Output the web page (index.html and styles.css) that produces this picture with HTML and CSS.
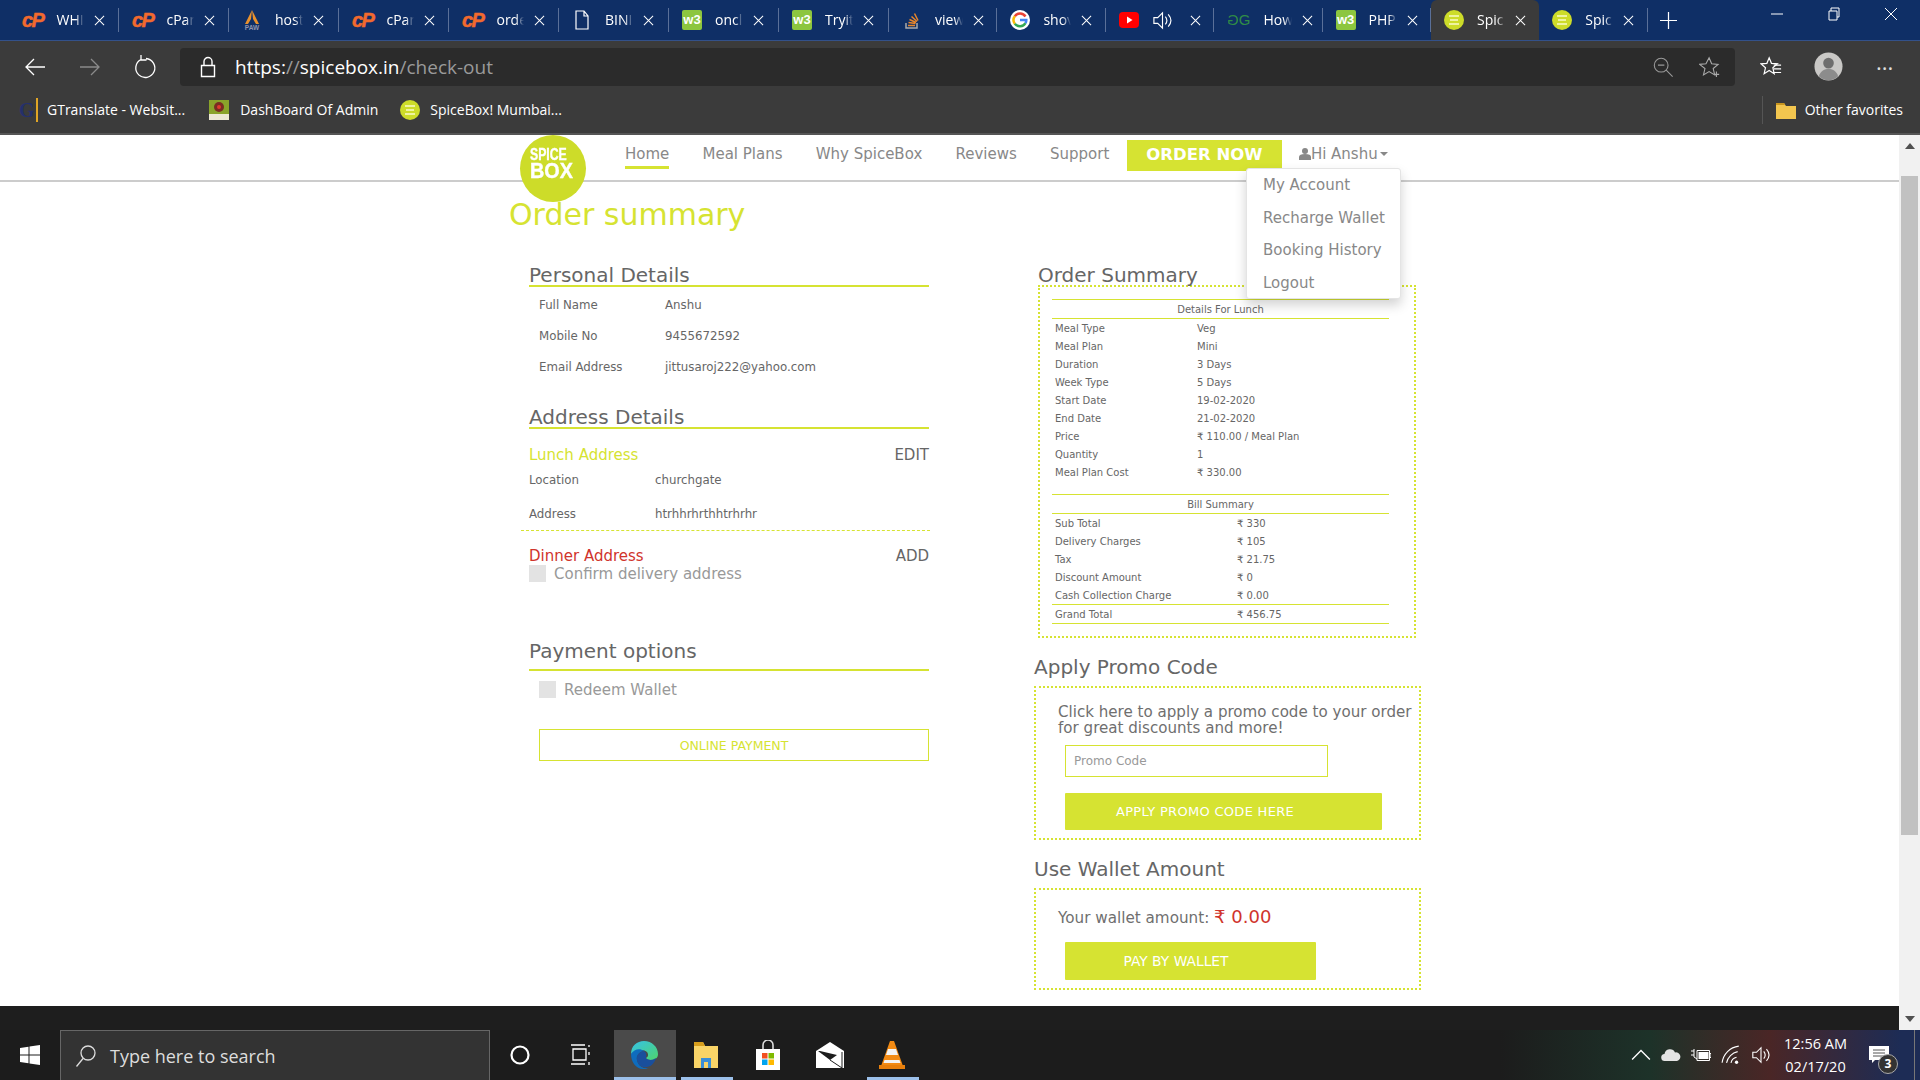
FILE: index.html
```html
<!DOCTYPE html>
<html>
<head>
  <title>SpiceBox - Order summary</title>
  <link rel="stylesheet" href="styles.css">
</head>
<body>
  <svg class="defs" width="0" height="0">
    <symbol id="i-x" viewBox="0 0 12 12"><path d="M1 1l10 10M11 1L1 11" stroke="#fff" stroke-width="1.1" fill="none"/></symbol>
    <symbol id="i-spice" viewBox="0 0 20 20"><circle cx="10" cy="10" r="10" fill="#cddc29"/><rect x="5" y="5" width="10" height="2" fill="#eef3a0"/><rect x="6" y="9" width="8" height="2" fill="#eef3a0"/><rect x="5" y="13" width="10" height="2" fill="#eef3a0"/></symbol>
    <symbol id="i-speaker" viewBox="0 0 22 22"><path d="M2 8h4l5-5v16l-5-5H2zM14 7c2 2.500 2 5.500 0 8M17 4.500c3.500 4 3.500 9 0 13" stroke="#fff" stroke-width="1.200" fill="none"/></symbol>
  </svg>

  <div class="tabs">
    <div class="tab"><span class="ico-cp">cP</span><span class="tab-title">WHI</span><svg class="tab-x"><use href="#i-x"/></svg></div>
    <div class="tab"><span class="ico-cp">cP</span><span class="tab-title">cPan</span><svg class="tab-x"><use href="#i-x"/></svg></div>
    <div class="tab">
      <svg class="ico" viewBox="0 0 20 20"><path d="M10 0L3 14h3l3-5zM10 0l7 14h-3l-3-5z" fill="#e8912d"/><text class="paw" x="10" y="19.500">PAW</text></svg>
      <span class="tab-title">host</span><svg class="tab-x"><use href="#i-x"/></svg>
    </div>
    <div class="tab"><span class="ico-cp">cP</span><span class="tab-title">cPan</span><svg class="tab-x"><use href="#i-x"/></svg></div>
    <div class="tab"><span class="ico-cp">cP</span><span class="tab-title">orde</span><svg class="tab-x"><use href="#i-x"/></svg></div>
    <div class="tab">
      <svg class="ico" viewBox="0 0 20 20"><path d="M4 1h8l4 5v13H4zM12 1v5h4" fill="none" stroke="#fff" stroke-width="1.200"/></svg>
      <span class="tab-title">BINI</span><svg class="tab-x"><use href="#i-x"/></svg>
    </div>
    <div class="tab"><span class="ico-w3">w3</span><span class="tab-title">oncl</span><svg class="tab-x"><use href="#i-x"/></svg></div>
    <div class="tab"><span class="ico-w3">w3</span><span class="tab-title">Tryit</span><svg class="tab-x"><use href="#i-x"/></svg></div>
    <div class="tab">
      <svg class="ico" viewBox="0 0 20 20"><path d="M4 13v5h11v-5" fill="none" stroke="#aaa" stroke-width="1.500"/><path d="M6 15.500h7M6.500 12.500l7 1M7.500 9.500l6.500 3M9.500 6.500l5.500 5M12.500 3.500l3.500 7" stroke="#e8862a" stroke-width="1.500"/></svg>
      <span class="tab-title">view</span><svg class="tab-x"><use href="#i-x"/></svg>
    </div>
    <div class="tab">
      <svg class="ico" viewBox="0 0 20 20"><circle cx="10" cy="10" r="10" fill="#fff"/><path d="M15.500 6.500A6.500 6.500 0 0 0 4.800 6.200" fill="none" stroke="#ea4335" stroke-width="2.500"/><path d="M4.800 6.200a6.500 6.500 0 0 0 0 7.600" fill="none" stroke="#fbbc05" stroke-width="2.500"/><path d="M4.800 13.800a6.500 6.500 0 0 0 10.700-.6" fill="none" stroke="#34a853" stroke-width="2.500"/><path d="M10 10h6.300a6.500 6.500 0 0 1-.8 3.200" fill="none" stroke="#4285f4" stroke-width="2.500"/></svg>
      <span class="tab-title">shov</span><svg class="tab-x"><use href="#i-x"/></svg>
    </div>
    <div class="tab">
      <svg class="ico" viewBox="0 0 20 20"><rect y="2" width="20" height="16" rx="4" fill="#f00"/><path d="M8 6.500l5.500 3.500L8 13.500z" fill="#fff"/></svg>
      <svg class="ico-sound"><use href="#i-speaker"/></svg>
      <svg class="tab-x"><use href="#i-x"/></svg>
    </div>
    <div class="tab">
      <span class="ico-gg"><span class="flip">G</span>G</span>
      <span class="tab-title">How</span><svg class="tab-x"><use href="#i-x"/></svg>
    </div>
    <div class="tab"><span class="ico-w3">w3</span><span class="tab-title">PHP</span><svg class="tab-x"><use href="#i-x"/></svg></div>
    <div class="tab active"><svg class="ico"><use href="#i-spice"/></svg><span class="tab-title">Spic</span><svg class="tab-x"><use href="#i-x"/></svg></div>
    <div class="tab"><svg class="ico"><use href="#i-spice"/></svg><span class="tab-title">Spic</span><svg class="tab-x"><use href="#i-x"/></svg></div>
    <svg class="new-tab" viewBox="0 0 18 18"><path d="M9 0v18M0 9h18" stroke="#fff" stroke-width="1.300"/></svg>
    <div class="win-btns">
      <svg viewBox="0 0 14 14"><path d="M1 7h12" stroke="#fff"/></svg>
      <svg viewBox="0 0 14 14"><path d="M2 4h8v9H2zM4 4V1h8v9h-2" fill="none" stroke="#fff"/></svg>
      <svg viewBox="0 0 14 14"><path d="M1 1l12 12M13 1L1 13" stroke="#fff"/></svg>
    </div>
  </div>

  <div class="toolbar">
    <svg class="tool" viewBox="0 0 24 24"><path d="M22 12H3M11 4l-8 8 8 8" fill="none" stroke="#fff" stroke-width="1.300"/></svg>
    <svg class="tool" viewBox="0 0 24 24"><path d="M2 12h19M13 4l8 8-8 8" fill="none" stroke="#8a8a8a" stroke-width="1.300"/></svg>
    <svg class="tool" viewBox="0 0 24 24"><path d="M8 4.500a9.500 9.500 0 1 0 5-1M8 0v5h5.500" fill="none" stroke="#fff" stroke-width="1.300"/></svg>
    <div class="address">
      <svg class="lock" viewBox="0 0 16 22"><path d="M1.500 9.500h13v11h-13zM4 9.500V5.500a4 4 0 0 1 8 0v4" fill="none" stroke="#fff" stroke-width="1.400"/></svg>
      <span class="url">https:<span class="dim">//</span>spicebox.in<span class="dim">/check-out</span></span>
      <svg class="addr-zoom" viewBox="0 0 24 24"><circle cx="10" cy="10" r="7.500" fill="none" stroke="#999" stroke-width="1.200"/><path d="M15.500 15.500l7 7M6.500 10h7" stroke="#999" stroke-width="1.200"/></svg>
      <svg class="addr-star" viewBox="0 0 24 24"><path d="M11 2l2.800 6.500 7 .6-5.300 4.600 1.600 6.900-6.100-3.600-6.100 3.600 1.600-6.900L.6 9.100l7-.6zM19 17v6M16 20h6" fill="none" stroke="#aaa" stroke-width="1.200"/></svg>
    </div>
    <svg class="fav-list" viewBox="0 0 24 24"><path d="M10 2l2.500 6 6.500.5-5 4.300 1.500 6.500-5.500-3.400-5.500 3.400 1.500-6.500-5-4.300 6.500-.5z" fill="none" stroke="#fff" stroke-width="1.300"/><path d="M15 10h8M15 14h8M15 18h8" stroke="#fff" stroke-width="1.300"/></svg>
    <svg class="avatar" viewBox="0 0 30 30"><circle cx="15" cy="15" r="14.500" fill="#c9c8c6"/><circle cx="15" cy="11.500" r="5.500" fill="#6e6e6e"/><path d="M5 25c2-6 6-7.500 10-7.500s8 1.500 10 7.500a14.500 14.500 0 0 1-20 0" fill="#8c8c8c"/></svg>
    <span class="dots">&middot;&middot;&middot;</span>
  </div>

  <div class="bookmarks">
    <span class="ico-g">G</span><span class="bm-text">GTranslate - Websit...</span>
    <svg class="ico bm-second" viewBox="0 0 20 20"><rect width="20" height="20" fill="#8aa32a"/><circle cx="10" cy="7" r="5" fill="#7a2d22"/><circle cx="10" cy="7" r="2" fill="#e03a2e"/><rect y="14" width="20" height="6" fill="#ece8d4"/></svg><span class="bm-text">DashBoard Of Admin</span>
    <svg class="ico bm-third"><use href="#i-spice"/></svg><span class="bm-text">SpiceBox! Mumbai...</span>
    <div class="bm-other">
      <svg class="ico" viewBox="0 0 20 20"><path d="M0 3h8l2 3h10v13H0z" fill="#f3c64f"/><path d="M0 3h8l1 2H0z" fill="#c8951f"/></svg>
      <span class="bm-text">Other favorites</span>
    </div>
  </div>

  <div class="viewport">
    <div class="page">
      <div class="site">
        <nav class="site-nav">
          <div class="logo"><span class="logo-top">SPICE</span><span class="logo-box">BOX</span></div>
          <a class="nav-link current">Home</a>
          <a class="nav-link">Meal Plans</a>
          <a class="nav-link">Why SpiceBox</a>
          <a class="nav-link">Reviews</a>
          <a class="nav-link">Support</a>
          <a class="order-now">ORDER NOW</a>
          <a class="user-link">
            <svg class="user-ico" viewBox="0 0 12 12"><circle cx="6" cy="3" r="3" fill="#888"/><path d="M0 12V9c0-2 2-3 6-3s6 1 6 3v3z" fill="#888"/></svg>Hi Anshu<span class="caret"></span>
          </a>
          <ul class="user-menu">
            <li>My Account</li>
            <li>Recharge Wallet</li>
            <li>Booking History</li>
            <li>Logout</li>
          </ul>
        </nav>

        <h1 class="page-title">Order summary</h1>

        <div class="cols">
          <div class="col-left">
            <h3 class="sec-title">Personal Details</h3>
            <div class="info-row indent"><span class="info-label">Full Name</span><span>Anshu</span></div>
            <div class="info-row indent"><span class="info-label">Mobile No</span><span>9455672592</span></div>
            <div class="info-row indent"><span class="info-label">Email Address</span><span>jittusaroj222@yahoo.com</span></div>

            <h3 class="sec-title address-title">Address Details</h3>
            <div class="addr-head lunch-head"><span class="lime">Lunch Address</span><a>EDIT</a></div>
            <div class="addr-row"><span class="info-label">Location</span><span>churchgate</span></div>
            <div class="addr-row last"><span class="info-label">Address</span><span>htrhhrhrthhtrhrhr</span></div>
            <div class="dash-line"></div>
            <div class="addr-head dinner-head"><span class="red">Dinner Address</span><a>ADD</a></div>
            <label class="check-row"><span class="fake-check"></span>Confirm delivery address</label>

            <h3 class="sec-title payment-title">Payment options</h3>
            <label class="check-row redeem"><span class="fake-check"></span>Redeem Wallet</label>
            <button class="online-btn">ONLINE PAYMENT</button>
          </div>

          <div class="col-right">
            <h3 class="sec-title plain">Order Summary</h3>
            <div class="dot-box summary-box">
              <div class="tbl-head">Details For Lunch</div>
              <div class="tbl-row"><span>Meal Type</span><span>Veg</span></div>
              <div class="tbl-row"><span>Meal Plan</span><span>Mini</span></div>
              <div class="tbl-row"><span>Duration</span><span>3 Days</span></div>
              <div class="tbl-row"><span>Week Type</span><span>5 Days</span></div>
              <div class="tbl-row"><span>Start Date</span><span>19-02-2020</span></div>
              <div class="tbl-row"><span>End Date</span><span>21-02-2020</span></div>
              <div class="tbl-row"><span>Price</span><span>₹ 110.00 / Meal Plan</span></div>
              <div class="tbl-row"><span>Quantity</span><span>1</span></div>
              <div class="tbl-row"><span>Meal Plan Cost</span><span>₹ 330.00</span></div>

              <div class="tbl-head bill-head">Bill Summary</div>
              <div class="tbl-row bill"><span>Sub Total</span><span>₹ 330</span></div>
              <div class="tbl-row bill"><span>Delivery Charges</span><span>₹ 105</span></div>
              <div class="tbl-row bill"><span>Tax</span><span>₹ 21.75</span></div>
              <div class="tbl-row bill"><span>Discount Amount</span><span>₹ 0</span></div>
              <div class="tbl-row bill"><span>Cash Collection Charge</span><span>₹ 0.00</span></div>
              <div class="tbl-row bill grand"><span>Grand Total</span><span>₹ 456.75</span></div>
            </div>

            <h3 class="sec-title plain wide promo-title">Apply Promo Code</h3>
            <div class="dot-box wide action-box promo-box">
              <p class="promo-text">Click here to apply a promo code to your order for great discounts and more!</p>
              <input class="promo-input" type="text" placeholder="Promo Code">
              <button class="lime-btn promo-btn">APPLY PROMO CODE HERE</button>
            </div>

            <h3 class="sec-title plain wide wallet-title">Use Wallet Amount</h3>
            <div class="dot-box wide action-box">
              <p class="wallet-text">Your wallet amount: <span class="wallet-amt">₹ 0.00</span></p>
              <button class="lime-btn wallet-btn">PAY BY WALLET</button>
            </div>
          </div>
        </div>
      </div>
      <div class="black-strip"></div>
    </div>
    <div class="scrollbar">
      <div class="arrow-up"></div>
      <div class="thumb"></div>
      <div class="arrow-down"></div>
    </div>
  </div>

  <div class="taskbar">
    <div class="start">
      <svg viewBox="0 0 20 20"><path d="M0 3l8.500-1.200V9.500H0zM9.500 1.600L20 0v9.500H9.500zM0 10.500h8.500v7.700L0 17zM9.500 10.500H20V20L9.500 18.400z" fill="#fff"/></svg>
    </div>
    <div class="search">
      <svg viewBox="0 0 22 24"><circle cx="13" cy="9" r="7" fill="none" stroke="#ddd" stroke-width="1.300"/><path d="M8 14.500L1.500 22.500" stroke="#ddd" stroke-width="1.300"/></svg>
      <span>Type here to search</span>
    </div>
    <div class="tb-item"><svg class="tb-ico small" viewBox="0 0 20 20"><circle cx="10" cy="10" r="8.500" fill="none" stroke="#fff" stroke-width="2.200"/></svg></div>
    <div class="tb-item task-view"><svg class="tb-ico small" viewBox="0 0 20 24"><path d="M2 6h13v11H2zM0 2h14M0 21h14M18 2v2M18 9v3M18 19v3" fill="none" stroke="#fff" stroke-width="1.300"/></svg></div>
    <div class="tb-item on">
      <svg class="tb-ico" viewBox="0 0 30 30">
        <defs><linearGradient id="edge-a" x1="0" y1="0" x2="1" y2="1"><stop offset="0" stop-color="#35c1e8"/><stop offset="1" stop-color="#4fd56c"/></linearGradient></defs>
        <path d="M2 14C2 6 8 1 15 1c8 0 14 6 14 13 0 4-3 6-7 6-3 0-5-1-5-2 2-1 3-3 1-6-3-3-10-3-16 2z" fill="url(#edge-a)"/>
        <path d="M2 14c3-5 9-6 13-3-6 1-9 6-6 12 2 4 6 6 11 5-2 1-4 1-6 1C7 29 2 22 2 14z" fill="#0f6cbd"/>
        <path d="M9 23c-3-6 0-11 6-12 3 2 2 5 2 7 1 2 6 3 10 0-2 7-7 10-13 9-3-1-4-2-5-4z" fill="#1a4f9c"/>
      </svg>
    </div>
    <div class="tb-item active">
      <svg class="tb-ico" viewBox="0 0 30 30"><path d="M3 2h9l2 4h13v22H3z" fill="#f9d467"/><path d="M3 2h9l2 4H3z" fill="#d79e1c"/><path d="M10 28V18h10v10h-3v-6h-4v6z" fill="#3a8fd8"/></svg>
    </div>
    <div class="tb-item">
      <svg class="tb-ico" viewBox="0 0 30 30"><path d="M3 9h24v21H3z" fill="#fff"/><path d="M10 9V5a5 5 0 0 1 10 0v4" fill="none" stroke="#ddd" stroke-width="1.600"/><rect x="9" y="13" width="5.500" height="5.500" fill="#f25022"/><rect x="15.500" y="13" width="5.500" height="5.500" fill="#7fba00"/><rect x="9" y="19.500" width="5.500" height="5.500" fill="#00a4ef"/><rect x="15.500" y="19.500" width="5.500" height="5.500" fill="#ffb900"/></svg>
    </div>
    <div class="tb-item">
      <svg class="tb-ico" viewBox="0 0 30 30"><path d="M1 11L15 2l14 9v17H1z" fill="#fff"/><path d="M3 11l12 9 7-5-17-4z" fill="#1c1c1c"/><path d="M15 20l12 8V12" fill="none" stroke="#1c1c1c" stroke-width="1"/></svg>
    </div>
    <div class="tb-item active">
      <svg class="tb-ico" viewBox="0 0 30 30"><path d="M13 1h4l9 25H4z" fill="#f28a13"/><path d="M11 9h8l2 6H9zM7.500 20h15l1 3h-17z" fill="#f3f3f3"/><rect x="2" y="25" width="26" height="4" fill="#e77f0c"/></svg>
    </div>
    <div class="tray">
      <div class="tray-ico"><svg viewBox="0 0 18 10"><path d="M1 9l8-8 8 8" fill="none" stroke="#fff" stroke-width="1.200"/></svg></div>
      <div class="tray-ico"><svg viewBox="0 0 20 14"><path d="M4 13a3.500 3.500 0 0 1-.5-7A5.500 5.500 0 0 1 14 4.500 4.300 4.300 0 0 1 16 13z" fill="#e4e4e4"/></svg></div>
      <div class="tray-ico"><svg viewBox="0 0 20 14"><path d="M0 3h3M0 7h3M3 1v8l3 2" fill="none" stroke="#fff"/><path d="M6 2.500h12.500v10H6zM18.500 5.500h1.500v4h-1.500z" fill="none" stroke="#fff"/><rect x="7.500" y="4" width="10" height="7" fill="#fff"/></svg></div>
      <div class="tray-ico"><svg viewBox="0 0 18 18"><path d="M1 16C2 8 8 2 16 1M5 16c1-5 5-9 10-10M9 16c.5-2.500 2.500-4.500 5-5" fill="none" stroke="#fff" stroke-width="1"/><circle cx="14" cy="15.500" r="1.500" fill="#fff"/></svg></div>
      <div class="tray-ico"><svg viewBox="0 0 22 22"><use href="#i-speaker"/></svg></div>
    </div>
    <div class="clock"><span>12:56 AM</span><span>02/17/20</span></div>
    <div class="notify">
      <svg viewBox="0 0 20 18"><path d="M0 0h20v14H6l-3 3v-3H0z" fill="#fff"/><path d="M4 4h12M4 7h12M4 10h12" stroke="#555"/></svg>
      <span class="notify-badge">3</span>
    </div>
    <div class="show-desktop"></div>
  </div>
</body>
</html>
```

FILE: styles.css
```css
* { box-sizing: border-box; }
html, body { margin: 0; height: 100%; overflow: hidden; }
body { display: flex; flex-direction: column; width: 1920px; height: 1080px; font-family: "Open Sans", sans-serif; color: #fff; background: #fff; }
.defs { position: absolute; }

/* browser tabs */
.tabs { display: flex; align-items: center; flex: 0 0 40px; padding-left: 9px; background: #0f2f66; border-bottom: 1px solid #33518a; }
.tab { display: flex; align-items: center; flex: 0 0 108.4px; height: 24px; padding-left: 13px; border-right: 1px solid #5a7099; }
.tab:nth-child(-n+8) { flex-basis: 110px; }
.tab.active { align-self: flex-end; height: 40px; background: #3b3b3b; border-right: 0; border-radius: 6px 6px 0 0; }
.ico { flex: 0 0 20px; width: 20px; height: 20px; }
.paw { fill: #8d93ad; font: bold 6.500px "Liberation Sans", sans-serif; text-anchor: middle; }
.ico-cp { flex: 0 0 20px; color: #f26a2e; font: italic bold 20px/20px "Liberation Sans", sans-serif; letter-spacing: -1.500px; -webkit-text-stroke: .5px #f26a2e; }
.ico-w3 { flex: 0 0 20px; height: 20px; background: #8cc63f; color: #fff; border-radius: 2px; font: bold 13px/20px "Liberation Sans", sans-serif; text-align: center; }
.ico-gg { flex: 0 0 20px; color: #2f8d46; font: 15px/20px "Liberation Sans", sans-serif; white-space: nowrap; }
.flip { display: inline-block; transform: scaleX(-1); }
.tab-title { flex: 0 0 28px; margin-left: 13px; overflow: hidden; font-size: 14px; line-height: 20px; white-space: nowrap; -webkit-mask-image: linear-gradient(90deg, #000 70%, transparent); mask-image: linear-gradient(90deg, #000 70%, transparent); }
.tab-x { flex: 0 0 11px; width: 11px; height: 11px; margin-left: 10px; }
.ico-sound { flex: 0 0 21px; width: 21px; height: 21px; margin-left: 13px; }
.ico-sound + .tab-x { margin-left: 17px; }
.new-tab { width: 17px; height: 17px; margin-left: 12px; }
.win-btns { display: flex; margin-left: auto; padding-right: 22px; gap: 43px; align-self: flex-start; padding-top: 7px; }
.win-btns svg { width: 14px; height: 14px; }

/* toolbar */
.toolbar { display: flex; align-items: center; flex: 0 0 48px; padding-top: 3px; background: #3b3b3b; }
.tool { width: 24px; height: 24px; margin-left: 23px; margin-right: 8px; }
.address { display: flex; align-items: center; width: 1555px; height: 38px; margin-left: 15px; background: #2b2b2b; border-radius: 4px; }
.lock { width: 16px; height: 22px; margin-left: 20px; }
.url { margin-left: 19px; font-size: 19px; }
.dim { color: #9a9a9a; }
.addr-zoom { width: 22px; height: 22px; margin-left: auto; }
.addr-star { width: 22px; height: 22px; margin-left: 25px; margin-right: 14px; }
.fav-list { width: 22px; height: 22px; margin-left: 25px; }
.avatar { width: 29px; height: 29px; margin-left: 32px; }
.dots { margin-left: 33px; font-size: 22px; line-height: 1; color: #ddd; }

/* favorites bar */
.bookmarks { display: flex; align-items: center; flex: 0 0 46px; padding-left: 19px; padding-bottom: 3px; background: #3b3b3b; border-bottom: 2px solid #555; }
.ico-g { width: 19px; color: #25306b; font: bold 20px/24px "Liberation Serif", serif; border-right: 2px solid #e0a526; }
.bm-text { margin-left: 9px; font-size: 14px; white-space: nowrap; }
.bm-second { margin-left: 24px; }
.bm-second + .bm-text { margin-left: 11px; }
.bm-third { margin-left: 22px; }
.bm-third + .bm-text { margin-left: 10px; }
.bm-other { display: flex; align-items: center; height: 28px; margin-left: auto; padding-left: 13px; padding-right: 17px; border-left: 1px solid #555; }

/* page + scrollbar */
.viewport { display: flex; flex: 1; min-height: 0; }
.page { display: flex; flex-direction: column; flex: 1; min-width: 0; }
.site { flex: 1; min-height: 0; background: #fff; color: #666; font-family: "DejaVu Sans", Verdana, sans-serif; }
.black-strip { flex: 0 0 24px; background: #1e1e1e; }
.scrollbar { display: flex; flex-direction: column; align-items: center; flex: 0 0 21px; background: #f1f1f1; }
.thumb { width: 17px; height: 659px; margin-top: 27px; background: #c1c1c1; }
.arrow-up { width: 0; height: 0; margin-top: 8px; border: 5px solid transparent; border-top: 0; border-bottom: 6px solid #505050; }
.arrow-down { width: 0; height: 0; margin-top: auto; margin-bottom: 8px; border: 5px solid transparent; border-bottom: 0; border-top: 6px solid #505050; }

/* site nav */
.site-nav { position: relative; display: flex; align-items: flex-start; height: 47px; padding-left: 520px; border-bottom: 2px solid #ccc; }
.logo { display: flex; flex-direction: column; flex: 0 0 66px; height: 67px; padding-top: 12px; padding-left: 10px; background: #cddc29; border-radius: 50%; color: #fff; font-family: "Liberation Sans", sans-serif; font-weight: bold; }
.logo-top, .logo-box { display: block; transform-origin: left center; white-space: nowrap; -webkit-text-stroke: .4px #fff; }
.logo-top { height: 15px; font-size: 17px; line-height: 15px; transform: scaleX(.72); }
.logo-box { height: 17px; font-size: 22px; line-height: 17px; transform: scaleX(.9); }
.nav-link { margin-top: 9px; margin-right: 33.200px; padding-bottom: 2px; color: #888; font-size: 15px; line-height: 20px; }
.logo + .nav-link { margin-left: 39px; }
.nav-link.current { border-bottom: 3px solid #d6e332; }
.order-now { flex: 0 0 155px; height: 31px; margin-top: 5px; margin-left: -15.600px; background: #d6e332; color: #fff; font-size: 16.500px; font-weight: bold; line-height: 30px; text-align: center; }
.user-link { display: flex; align-items: center; margin-top: 9px; margin-left: 17px; color: #888; font-size: 15px; line-height: 20px; }
.user-ico { width: 12px; height: 12px; }
.caret { width: 0; height: 0; margin-left: 2px; border: 4px solid transparent; border-top-color: #888; border-bottom: 0; }
.user-menu { position: absolute; top: 33px; left: 1246px; z-index: 5; width: 155px; height: 131px; margin: 0; padding: 0; list-style: none; background: #fff; border: 1px solid #e4e4e4; border-radius: 3px; box-shadow: 0 6px 12px rgba(0, 0, 0, .18); color: #888; font-size: 15px; }
.user-menu li { height: 32.600px; padding-left: 16px; line-height: 32px; }

/* main columns */
.page-title { margin: 14px 0 0 509px; color: #d6e332; font-size: 30px; font-weight: normal; line-height: 38px; }
.cols { display: flex; align-items: flex-start; padding-left: 529px; }
.col-left { flex: 0 0 399px; }
.col-right { flex: 0 0 387px; margin-left: 109px; }
.sec-title { margin: 30px 0 2px; height: 23px; color: #666; font-size: 20px; font-weight: normal; line-height: 22px; border-bottom: 2px solid #d6e332; }
.sec-title.plain { margin-bottom: 0; height: 21px; border-bottom: 0; }
.address-title { margin-top: 24px; }
.payment-title { margin-top: 58px; height: 31px; }
.info-row, .addr-row { display: flex; align-items: center; font-size: 11.800px; }
.info-row { height: 31px; }
.info-row.indent { padding-left: 10px; }
.info-label { flex: 0 0 126px; }
.addr-row { height: 34px; }
.addr-row.last { height: 33px; }
.addr-head { display: flex; justify-content: space-between; height: 18px; font-size: 15px; line-height: 18px; }
.lunch-head { height: 17px; margin-top: 17px; }
.dinner-head { margin-top: 16px; }
.lime { color: #d6e332; }
.red { color: #d0342c; }
.dash-line { margin-left: -8px; margin-right: -1px; border-top: 1px dashed #d6e332; }
.check-row { display: flex; align-items: center; height: 17px; color: #999; font-size: 15px; }
.fake-check { flex: 0 0 17px; height: 17px; margin-right: 8px; background: #e3e3e3; }
.redeem { margin-top: 10px; margin-left: 10px; }
.online-btn { display: block; width: 390px; height: 32px; margin-top: 31px; margin-left: 10px; padding: 0; background: #fff; border: 1px solid #d6e332; color: #d6e332; font: 12.500px "DejaVu Sans", Verdana, sans-serif; }

/* right column boxes */
.wide { margin-left: -4px; }
.dot-box { border: 2px dotted #d6e332; }
.summary-box { width: 378px; height: 353px; padding: 12px 25px 0 12px; }
.tbl-head { height: 20px; border-top: 1px solid #d6e332; border-bottom: 1px solid #d6e332; font-size: 10px; line-height: 19px; text-align: center; }
.tbl-row { display: flex; align-items: center; height: 18px; padding-left: 3px; font-size: 10px; }
.tbl-row span:first-child { flex: 0 0 142px; }
.tbl-row.bill span:first-child { flex-basis: 182px; }
.bill-head { margin-top: 13px; }
.tbl-row.grand { height: 20px; border-top: 1px solid #d6e332; border-bottom: 1px solid #d6e332; }
.sec-title.promo-title { margin-top: 18px; height: 30px; }
.sec-title.wallet-title { margin-top: 18px; height: 30px; }
.action-box { width: 387px; padding: 15px 0 8px 22px; }
.promo-box { padding-top: 16px; }
.promo-text { margin: 0; color: #6f6f6f; font-size: 15.100px; line-height: 16px; }
.promo-input { display: block; width: 263px; height: 32px; margin-top: 9px; margin-left: 7px; padding: 0 8px; border: 1px solid #d6e332; font: 12px "DejaVu Sans", Verdana, sans-serif; }
.promo-input::placeholder { color: #999; opacity: 1; }
.lime-btn { display: block; margin-left: 7px; padding: 0; background: #d6e332; border: 0; border-radius: 1px; color: #fff; font: 13px "DejaVu Sans", Verdana, sans-serif; }
.promo-btn { width: 317px; height: 37px; margin-top: 16px; padding-right: 37px; letter-spacing: .3px; }
.wallet-text { margin: 0; color: #6f6f6f; font-size: 15.200px; line-height: 24px; }
.wallet-amt { color: #d0342c; font-size: 18px; }
.wallet-btn { width: 251px; height: 38px; margin-top: 12px; padding-right: 29px; font-size: 13.800px; }

/* taskbar */
.taskbar { display: flex; align-items: stretch; flex: 0 0 50px; background: linear-gradient(90deg, #1c1c1c 0, #1c1c1c 1500px, #1d3229 1650px, #4a2626 1770px, #1d2c55 1900px); color: #fff; }
.start { display: flex; align-items: center; justify-content: center; flex: 0 0 60px; }
.start svg { width: 20px; height: 20px; }
.search { display: flex; align-items: center; flex: 0 0 430px; background: #333; border: 1px solid #666; border-bottom: 0; font-size: 18px; color: #ddd; }
.search svg { width: 22px; height: 24px; margin-left: 14px; margin-right: 13px; }
.tb-item { display: flex; align-items: center; justify-content: center; flex: 0 0 62px; padding-right: 2px; }
.tb-item.task-view { padding-right: 4px; }
.tb-item.on { background: #4a4a4a; box-shadow: inset 0 -3px 0 #9cc0ea; }
.tb-item.active { background: linear-gradient(#9cc0ea, #9cc0ea) center bottom / 52px 3px no-repeat; }
.tb-ico { width: 30px; height: 30px; }
.tb-ico.small { width: 20px; height: 24px; }
.tray { display: flex; margin-left: auto; }
.tray-ico { display: flex; align-items: center; justify-content: center; width: 30px; }
.tray-ico svg { width: 20px; height: 20px; }
.clock { display: flex; flex-direction: column; align-items: center; justify-content: center; flex: 0 0 79px; font-size: 14.500px; line-height: 23px; }
.notify { position: relative; display: flex; align-items: center; flex: 0 0 59px; padding-left: 14px; }
.notify svg { width: 20px; height: 18px; }
.notify-badge { position: absolute; top: 24px; left: 23px; width: 20px; height: 20px; background: #333; border: 1px solid #aaa; border-radius: 50%; font-size: 12px; font-weight: bold; line-height: 18px; text-align: center; }
.show-desktop { flex: 0 0 6px; border-left: 1px solid #777; }
```
